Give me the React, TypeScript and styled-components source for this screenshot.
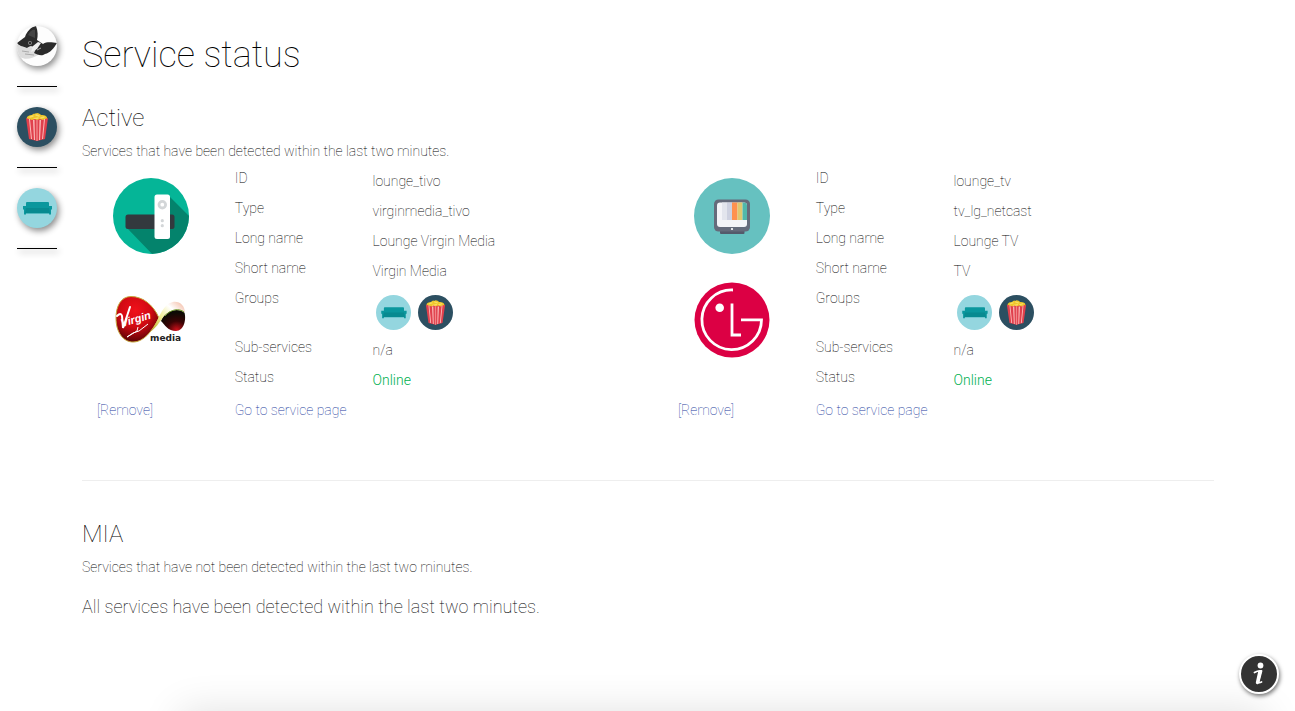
import React from "react";
import styled, { createGlobalStyle } from "styled-components";

const GlobalStyle = createGlobalStyle`
  *, *::before, *::after { box-sizing: border-box; }
  body {
    margin: 0;
    background: #fff;
    color: #000;
    font-family: Roboto, "Liberation Sans", sans-serif;
    font-size: 14px;
    font-weight: 100;
    line-height: 20px;
  }
`;

const Page = styled.div`
  display: flex;
  min-height: 100vh;
  overflow: hidden;
`;

const Sidebar = styled.nav`
  flex: none;
  width: 82px;
  padding: 26px 0 0 17px;
`;

const NavList = styled.ul`
  list-style: none;
  width: 40px;
  margin: 0;
  padding: 0;
`;

const NavItem = styled.li`
  padding-bottom: 20px;
  margin-bottom: 20px;
  border-bottom: 1px solid #000;
  filter: drop-shadow(2px 3px 3px rgba(0, 0, 0, 0.45));
`;

const NavLink = styled.a`
  display: block;
  height: 40px;
`;

const Main = styled.main`
  flex: 1;
  min-width: 0;
  padding: 35px 81px 40px 0;
`;

const Title = styled.h1`
  margin: 0;
  font-size: 36px;
  font-weight: 100;
  line-height: 40px;
`;

const Section = styled.section`
  padding-top: 30px;
`;

const Heading = styled.h2`
  margin: 0 0 9px;
  font-size: 24px;
  font-weight: 100;
  line-height: 27px;
`;

const Intro = styled.p`
  margin: 0;
`;

const Notice = styled.p`
  margin: 20px 0 0;
  font-size: 18px;
`;

const Divider = styled.hr`
  margin: 60px 0 10px;
  border: 0;
  border-top: 1px solid #eee;
`;

const Services = styled.div`
  display: grid;
  grid-template-columns: repeat(2, minmax(0, 1fr));
  column-gap: 30px;
  padding-top: 7px;
`;

const Card = styled.article`
  display: grid;
  grid-template-columns: 1fr 3fr;
`;

const Logos = styled.div`
  display: flex;
  flex-direction: column;
  align-items: center;
  gap: 28px;
  padding-top: 10px;
`;

const Details = styled.dl`
  margin: 0;
`;

const Row = styled.div`
  display: grid;
  grid-template-columns: 1fr 2fr;
  padding-bottom: 7px;
`;

const Term = styled.dt`
  padding: 0 15px;
`;

const Value = styled.dd<{ $online?: boolean }>`
  margin: 0;
  padding: 3px 15px 0;
  color: ${(p) => (p.$online ? "#00b050" : "inherit")};
  font-weight: ${(p) => (p.$online ? 300 : 100)};
`;

const Groups = styled.div`
  display: flex;
  gap: 7px;
  padding: 4px 3px 0;
`;

const Action = styled.div`
  padding: 3px 15px 0;
`;

const TextLink = styled.a`
  color: #1a3a9c;
  text-decoration: none;
`;

const RemoveButton = styled.button`
  padding: 0;
  border: 0;
  background: none;
  color: #1a3a9c;
  font: inherit;
  cursor: pointer;
`;

const InfoButton = styled.button`
  position: fixed;
  right: 16px;
  bottom: 17px;
  width: 40px;
  height: 40px;
  padding: 0;
  border: 2px solid #fff;
  border-radius: 50%;
  background: #333;
  box-shadow: 1px 2px 4px rgba(0, 0, 0, 0.55);
  cursor: pointer;
`;

const Drawer = styled.div`
  position: fixed;
  left: 180px;
  right: 30px;
  top: 100%;
  height: 80px;
  background: #fff;
  box-shadow: 0 0 40px rgba(0, 0, 0, 0.12);
`;

const CatIcon = () => (
  <svg width="40" height="40" viewBox="0 0 40 40" role="img" aria-label="Home">
    <defs>
      <clipPath id="cat-clip"><circle cx="20" cy="20" r="20" /></clipPath>
    </defs>
    <g clipPath="url(#cat-clip)">
      <rect width="40" height="40" fill="#fdfdfd" />
      <path d="M0 18 C5 22 16 20 22 23 L21 29 C15 33 8 34 3 31 L0 27Z" fill="#dcdcdc" />
      <path d="M0 17 L8 11 C10 5 14 1 19 0 C21 5 21 10 20 14 L26 18 C31 15 36 17 40 17 C37 22 33 27 28 28 C24 31 20 28 17 27 L19 23 C18 20 13 19 10 22 C5 20 2 20 0 17Z" fill="#2b2b2b" />
      <path d="M11 9 C13 5 16 3 18 4 L18 12Z" fill="#444" />
      <path d="M16 20 L21 16 L24 17 L20 23 L14 26Z" fill="#f0f0f0" />
      <circle cx="13" cy="17" r="2" fill="#888" />
      <circle cx="13" cy="17" r="1" fill="#111" />
      <path d="M20 24 L24 22 M8 28 L17 29 M5 25 L12 26" stroke="#aaa" strokeWidth="1" />
    </g>
  </svg>
);

const PopcornIcon = ({ size = 40 }: { size?: number }) => (
  <svg width={size} height={size} viewBox="0 0 40 40" role="img" aria-label="Cinema">
    <circle cx="20" cy="20" r="20" fill="#2c4f61" />
    <path d="M10 12 C9 9 13 8 15 8 C16 6 19 7 20 6 C22 6 23 7 24 8 C28 8 31 9 30 13 L20 15Z" fill="#efc62a" />
    <path d="M13 10 L16 9 M19 8 L22 9 M24 11 L27 10 M17 12 L21 11" stroke="#f8de62" strokeWidth="1.500" strokeLinecap="round" />
    <path d="M9 11 L12 12 L15 13 L18 12 L20 13 L23 12 L26 13 L28 12 L31 11 L28 32 L20 34 L12 32Z" fill="#e0404c" />
    <path d="M12 12 L13 12 L15 32 L14 32Z M16 13 L17.500 13 L18 33 L17 33Z M22.500 13 L24 13 L23 33 L22 33Z M27 12 L28 12 L26 32 L25 32Z" fill="#fbb9b8" />
    <path d="M20 13 L20 34" stroke="#ef8588" strokeWidth="1.400" />
  </svg>
);

const SofaIcon = ({ size = 40 }: { size?: number }) => (
  <svg width={size} height={size} viewBox="0 0 40 40" role="img" aria-label="Lounge">
    <circle cx="20" cy="20" r="20" fill="#94d6df" />
    <path d="M9 15 Q9 14 10 14 H31 Q32 14 32 15 V18 L35 18 V21 L34 22 V26.500 H32 V25.500 H9 V26.500 H7 V22 L6 21 V18 H9Z" fill="#0a979d" />
    <path d="M9 20 H32 L33 25 H8Z" fill="#078a90" />
  </svg>
);

const StreamerIcon = () => (
  <svg width="76" height="76" viewBox="0 0 76 76" role="img" aria-label="Set-top box">
    <defs>
      <clipPath id="streamer-clip"><circle cx="38" cy="38" r="38" /></clipPath>
    </defs>
    <circle cx="38" cy="38" r="38" fill="#05b597" />
    <path d="M56 18 L80 42 V80 H43 L14 50 H42Z" fill="#04836c" clipPath="url(#streamer-clip)" />
    <rect x="12.500" y="36.500" width="49" height="14.500" rx="2.500" fill="#33393e" />
    <rect x="41.500" y="16.500" width="15.500" height="44.500" rx="2.500" fill="#fff" />
    <circle cx="49.300" cy="26.700" r="3.300" fill="none" stroke="#d3d6d8" strokeWidth="2.800" />
    <circle cx="49.300" cy="42.700" r="1.600" fill="#d3d6d8" />
    <circle cx="49.300" cy="47.700" r="1.600" fill="#d3d6d8" />
  </svg>
);

const TvIcon = () => (
  <svg width="76" height="76" viewBox="0 0 76 76" role="img" aria-label="Television">
    <circle cx="38" cy="38" r="38" fill="#66c1c0" />
    <rect x="26" y="51" width="24.500" height="5" rx="1" fill="#545a6b" />
    <rect x="20" y="21.500" width="36" height="32" rx="4.500" fill="#656b7b" />
    <defs>
      <clipPath id="screen-clip"><rect x="23" y="24.500" width="30" height="24.500" rx="3" /></clipPath>
    </defs>
    <g clipPath="url(#screen-clip)">
      <rect x="23" y="24" width="30" height="26" fill="#f4f4f8" />
      <rect x="28" y="24" width="5" height="18" fill="#e3e5ed" />
      <rect x="33" y="24" width="5" height="18" fill="#ced1e0" />
      <rect x="38" y="24" width="5.500" height="18" fill="#ff914e" />
      <rect x="43.500" y="24" width="5" height="18" fill="#dfc86f" />
      <rect x="48.500" y="24" width="5" height="18" fill="#50b8ab" />
    </g>
    <circle cx="38" cy="51" r="1.100" fill="#fff" />
  </svg>
);

const LgLogo = () => (
  <svg width="76" height="76" viewBox="0 0 76 76" role="img" aria-label="LG">
    <circle cx="38" cy="38" r="37.500" fill="#dc0044" />
    <path d="M39 8 A29.800 29.800 0 1 0 67.500 37.800 H47" fill="none" stroke="#fff" strokeWidth="2.800" />
    <path d="M38 21.500 V53 H47" fill="none" stroke="#fff" strokeWidth="2.800" />
    <circle cx="25.700" cy="25.700" r="4.300" fill="#fff" />
  </svg>
);

const VirginLogo = () => (
  <svg width="76" height="76" viewBox="0 0 76 76" role="img" aria-label="Virgin Media">
    <defs>
      <radialGradient id="virgin-red" cx="0.45" cy="0.3" r="0.75">
        <stop offset="0" stopColor="#f0101a" />
        <stop offset="0.5" stopColor="#cf0a12" />
        <stop offset="1" stopColor="#4a0204" />
      </radialGradient>
      <radialGradient id="virgin-dark" cx="0.65" cy="0.95" r="0.8">
        <stop offset="0" stopColor="#d0101a" />
        <stop offset="0.5" stopColor="#3a0304" />
        <stop offset="1" stopColor="#0c0a04" />
      </radialGradient>
      <linearGradient id="virgin-band" x1="0" y1="1" x2="1" y2="0">
        <stop offset="0" stopColor="#b6a51c" />
        <stop offset="0.4" stopColor="#f0ec90" />
        <stop offset="0.7" stopColor="#fff" />
        <stop offset="1" stopColor="#f2b49a" />
      </linearGradient>
    </defs>
    <path d="M46 36 C40 22 29 14.500 18 14.500 C8 14.500 3 24 3 36 C3 50 10 60 20 60 C31 60 39 49 46 36Z" fill="url(#virgin-red)" stroke="#c7a63a" strokeWidth="1" />
    <path d="M48 39 C52 29 62 24 71 29 C74 37 71 49 63 49 C55 49 52 43 48 39Z" fill="url(#virgin-dark)" />
    <path d="M37 50 C45 43 47 23 60 20 C67 19 72 24 72 31 C66 26 57 27 51 34 C46 41 43 46 37 50Z" fill="url(#virgin-band)" />
    <path d="M52 34 C58 27 66 26 71 30" fill="none" stroke="#6f9a2c" strokeWidth="1" />
    <text x="9" y="45" transform="rotate(-16 9 45)" fill="#fff" fontFamily="Liberation Sans, sans-serif" fontSize="11" fontWeight="700" fontStyle="italic">Virgin</text>
    <path d="M4 34 Q8 30 9 34 L10 46 L17 25" fill="none" stroke="#fff" strokeWidth="2" strokeLinecap="round" />
    <path d="M25 45 L24 49 L14 55 Q20 50 26 49 L35 42" fill="none" stroke="#fff" strokeWidth="1" />
    <text x="37" y="59" fill="#222" fontFamily="DejaVu Sans, sans-serif" fontSize="9" fontWeight="700">media</text>
  </svg>
);

const InfoGlyph = () => (
  <svg width="36" height="36" viewBox="0 0 36 36" aria-hidden="true">
    <circle cx="19.500" cy="9.500" r="2.900" fill="#fff" />
    <path d="M13.500 16.500 Q17 14.500 20.500 15 L17.700 25.500 Q17.500 27.500 20.500 26" fill="none" stroke="#fff" strokeWidth="1.800" strokeLinecap="round" strokeLinejoin="round" />
    <path d="M18.800 16 L16.500 26.500" stroke="#fff" strokeWidth="3.400" strokeLinecap="round" />
  </svg>
);

type Service = {
  id: string;
  type: string;
  longName: string;
  shortName: string;
  icons: React.ReactNode;
};

const services: Service[] = [
  {
    id: "lounge_tivo",
    type: "virginmedia_tivo",
    longName: "Lounge Virgin Media",
    shortName: "Virgin Media",
    icons: <><StreamerIcon /><VirginLogo /></>,
  },
  {
    id: "lounge_tv",
    type: "tv_lg_netcast",
    longName: "Lounge TV",
    shortName: "TV",
    icons: <><TvIcon /><LgLogo /></>,
  },
];

const Field = ({ label, online, children }: { label: string; online?: boolean; children: React.ReactNode }) => (
  <Row>
    <Term>{label}</Term>
    <Value $online={online}>{children}</Value>
  </Row>
);

const ServiceCard = ({ service }: { service: Service }) => (
  <Card>
    <Logos>{service.icons}</Logos>
    <Details>
      <Field label="ID">{service.id}</Field>
      <Field label="Type">{service.type}</Field>
      <Field label="Long name">{service.longName}</Field>
      <Field label="Short name">{service.shortName}</Field>
      <Field label="Groups">
        <Groups><SofaIcon size={35} /><PopcornIcon size={35} /></Groups>
      </Field>
      <Field label="Sub-services">n/a</Field>
      <Field label="Status" online>Online</Field>
    </Details>
    <Action><RemoveButton type="button">[Remove]</RemoveButton></Action>
    <Action><TextLink href={"#" + service.id}>Go to service page</TextLink></Action>
  </Card>
);

export default function App() {
  return (
    <Page>
      <GlobalStyle />
      <Sidebar>
        <NavList>
          <NavItem><NavLink href="#home"><CatIcon /></NavLink></NavItem>
          <NavItem><NavLink href="#cinema"><PopcornIcon /></NavLink></NavItem>
          <NavItem><NavLink href="#lounge"><SofaIcon /></NavLink></NavItem>
        </NavList>
      </Sidebar>
      <Main>
        <Title>Service status</Title>
        <Section>
          <Heading>Active</Heading>
          <Intro>Services that have been detected within the last two minutes.</Intro>
          <Services>
            {services.map((s) => <ServiceCard key={s.id} service={s} />)}
          </Services>
        </Section>
        <Divider />
        <Section>
          <Heading>MIA</Heading>
          <Intro>Services that have not been detected within the last two minutes.</Intro>
          <Notice>All services have been detected within the last two minutes.</Notice>
        </Section>
      </Main>
      <Drawer />
      <InfoButton type="button" aria-label="Information"><InfoGlyph /></InfoButton>
    </Page>
  );
}
